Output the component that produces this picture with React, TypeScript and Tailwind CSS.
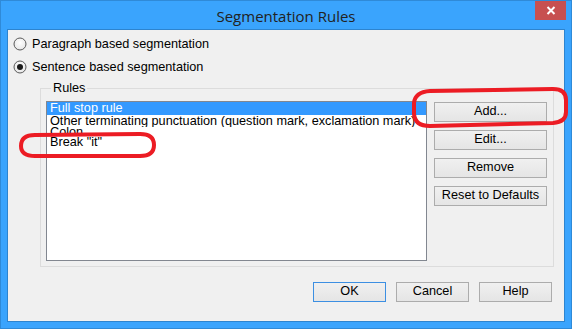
import React from "react";

const font = { fontFamily: '"Liberation Sans", Arial, sans-serif' };

function Radio({ checked, label }: { checked?: boolean; label: string }) {
  return (
    <div className="flex items-center h-[20px] pl-[5px] gap-[5px]">
      <svg width="14" height="14" viewBox="0 0 14 14">
        <defs>
          <radialGradient id={checked ? "rg1" : "rg2"} cx="50%" cy="40%" r="60%">
            <stop offset="0%" stopColor="#ffffff" />
            <stop offset="100%" stopColor="#e6e6e6" />
          </radialGradient>
        </defs>
        <circle cx="7" cy="7" r="6" fill={`url(#${checked ? "rg1" : "rg2"})`} stroke="#5a5a5a" strokeWidth="1" />
        {checked && <circle cx="7" cy="7" r="3" fill="#1a1a1a" />}
      </svg>
      <span className="text-[12.7px] text-black leading-none">{label}</span>
    </div>
  );
}

function Btn({ label, focus }: { label: string; focus?: boolean }) {
  return (
    <div
      className={`h-[20px] flex items-center justify-center text-[12.7px] text-black border bg-gradient-to-b from-[#f0f0f0] to-[#e5e5e5] ${
        focus ? "border-[#3c8fe2]" : "border-[#acacac]"
      }`}
    >
      {label}
    </div>
  );
}

export default function App() {
  return (
    <div className="relative w-[572px] h-[329px] bg-[#3aa4fd] border border-[#2f8ad8] flex flex-col" style={font}>
      {/* title bar */}
      <div className="relative h-[28px] flex items-center justify-center">
        <span className="text-[15px] text-[#222] pt-[3px]" style={{ fontFamily: '"Open Sans", "Noto Sans", sans-serif' }}>
          Segmentation Rules
        </span>
        <div className="absolute right-[5px] top-0 w-[31px] h-[19px] bg-[#c75050] flex items-center justify-center">
          <svg width="10" height="9" viewBox="0 0 10 9">
            <path d="M1.5 1 L8.5 8 M8.5 1 L1.5 8" stroke="#fff" strokeWidth="2" />
          </svg>
        </div>
      </div>

      {/* client */}
      <div className="mx-[6px] h-[293px] border border-[#2d84cf] bg-[#f0f0f0] flex flex-col">
        <div className="pt-[4px] flex flex-col gap-[3px]">
          <Radio label="Paragraph based segmentation" />
          <Radio checked label="Sentence based segmentation" />
        </div>

        <fieldset className="ml-[32px] mt-[4px] w-[514px] border border-[#dcdcdc] px-[5px] pb-[5px]">
          <legend className="ml-[5px] px-[2px] text-[12.7px] leading-[14px] text-black">Rules</legend>
          <div className="flex gap-[7px] pt-[6px]">
            <div className="w-[381px] h-[160px] border border-[#828790] bg-white overflow-hidden text-[12.7px] text-black">
              <div className="h-[13px] leading-[13px] bg-[#3399ff] text-white pl-[3px] whitespace-nowrap">Full stop rule</div>
              <div className="h-[12px] leading-[13px] pl-[3px] whitespace-nowrap overflow-hidden">
                Other terminating punctuation (question mark, exclamation mark)
              </div>
              <div className="h-[8px] leading-[11px] pl-[3px] whitespace-nowrap overflow-hidden">Colon</div>
              <div className="h-[15px] leading-[15px] pl-[3px] whitespace-nowrap bg-white">Break "it"</div>
            </div>
            <div className="w-[113px] flex flex-col gap-[8px] mt-[1px]">
              <Btn label="Add..." />
              <Btn label="Edit..." />
              <Btn label="Remove" />
              <Btn label="Reset to Defaults" />
            </div>
          </div>
        </fieldset>

        <div className="flex justify-end gap-[10px] pr-[12px] mt-[15px]">
          <div className="w-[73px]"><Btn label="OK" focus /></div>
          <div className="w-[73px]"><Btn label="Cancel" /></div>
          <div className="w-[73px]"><Btn label="Help" /></div>
        </div>
      </div>

      {/* red annotations */}
      <svg className="absolute left-[-1px] top-[-1px] pointer-events-none" width="572" height="329" viewBox="0 0 572 329">
        <path
          d="M35 135 L140 134 Q154 134 154 145 Q154 156 140 156 L35 156 Q21 156 21 146 Q21 135 35 135 Z"
          fill="none"
          stroke="#ec1c24"
          strokeWidth="4"
        />
        <path
          d="M430 91 L553 89 Q566 89 566 100 L566 112 Q566 122 553 123 L430 126 Q415 126 414 114 L414 103 Q415 92 430 91 Z"
          fill="none"
          stroke="#ec1c24"
          strokeWidth="4"
        />
      </svg>
    </div>
  );
}
